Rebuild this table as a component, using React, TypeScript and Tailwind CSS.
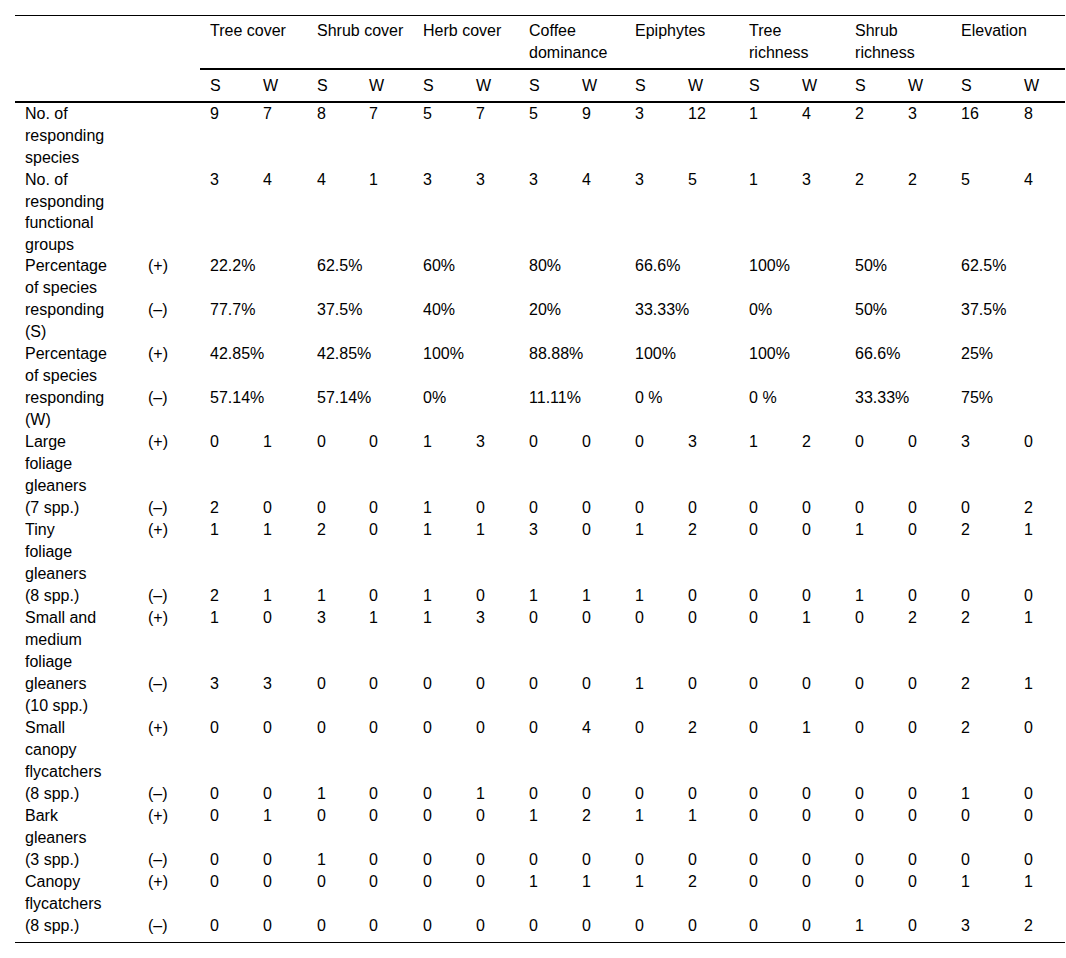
const groups = [
  "Tree cover",
  "Shrub cover",
  "Herb cover",
  "Coffee|dominance",
  "Epiphytes",
  "Tree|richness",
  "Shrub|richness",
  "Elevation",
];

// column widths in px (label, sign, then S/W pairs)
const widths = [123, 62, 53, 54, 52, 54, 53, 53, 53, 53, 53, 61, 53, 53, 53, 53, 63, 51];

type Row = { label: string; sign: string; values?: (string | number)[]; pct?: string[] };

const rows: Row[] = [
  { label: "No. of|responding|species", sign: "", values: [9, 7, 8, 7, 5, 7, 5, 9, 3, 12, 1, 4, 2, 3, 16, 8] },
  { label: "No. of|responding|functional|groups", sign: "", values: [3, 4, 4, 1, 3, 3, 3, 4, 3, 5, 1, 3, 2, 2, 5, 4] },
  { label: "Percentage|of species", sign: "(+)", pct: ["22.2%", "62.5%", "60%", "80%", "66.6%", "100%", "50%", "62.5%"] },
  { label: "responding|(S)", sign: "(–)", pct: ["77.7%", "37.5%", "40%", "20%", "33.33%", "0%", "50%", "37.5%"] },
  { label: "Percentage|of species", sign: "(+)", pct: ["42.85%", "42.85%", "100%", "88.88%", "100%", "100%", "66.6%", "25%"] },
  { label: "responding|(W)", sign: "(–)", pct: ["57.14%", "57.14%", "0%", "11.11%", "0 %", "0 %", "33.33%", "75%"] },
  { label: "Large|foliage|gleaners", sign: "(+)", values: [0, 1, 0, 0, 1, 3, 0, 0, 0, 3, 1, 2, 0, 0, 3, 0] },
  { label: "(7 spp.)", sign: "(–)", values: [2, 0, 0, 0, 1, 0, 0, 0, 0, 0, 0, 0, 0, 0, 0, 2] },
  { label: "Tiny|foliage|gleaners", sign: "(+)", values: [1, 1, 2, 0, 1, 1, 3, 0, 1, 2, 0, 0, 1, 0, 2, 1] },
  { label: "(8 spp.)", sign: "(–)", values: [2, 1, 1, 0, 1, 0, 1, 1, 1, 0, 0, 0, 1, 0, 0, 0] },
  { label: "Small and|medium|foliage", sign: "(+)", values: [1, 0, 3, 1, 1, 3, 0, 0, 0, 0, 0, 1, 0, 2, 2, 1] },
  { label: "gleaners|(10 spp.)", sign: "(–)", values: [3, 3, 0, 0, 0, 0, 0, 0, 1, 0, 0, 0, 0, 0, 2, 1] },
  { label: "Small|canopy|flycatchers", sign: "(+)", values: [0, 0, 0, 0, 0, 0, 0, 4, 0, 2, 0, 1, 0, 0, 2, 0] },
  { label: "(8 spp.)", sign: "(–)", values: [0, 0, 1, 0, 0, 1, 0, 0, 0, 0, 0, 0, 0, 0, 1, 0] },
  { label: "Bark|gleaners", sign: "(+)", values: [0, 1, 0, 0, 0, 0, 1, 2, 1, 1, 0, 0, 0, 0, 0, 0] },
  { label: "(3 spp.)", sign: "(–)", values: [0, 0, 1, 0, 0, 0, 0, 0, 0, 0, 0, 0, 0, 0, 0, 0] },
  { label: "Canopy|flycatchers", sign: "(+)", values: [0, 0, 0, 0, 0, 0, 1, 1, 1, 2, 0, 0, 0, 0, 1, 1] },
  { label: "(8 spp.)", sign: "(–)", values: [0, 0, 0, 0, 0, 0, 0, 0, 0, 0, 0, 0, 1, 0, 3, 2] },
];

const Lines = ({ text }: { text: string }) => (
  <>
    {text.split("|").map((t, i) => (
      <span key={i} className="block whitespace-nowrap">
        {t}
      </span>
    ))}
  </>
);

const App = () => {
  return (
    <div
      className="min-h-screen bg-white pl-[15px] pt-[15px] text-black"
      style={{ fontFamily: '"Liberation Sans", Arial, sans-serif' }}
    >
      <table className="w-[1050px] table-fixed border-collapse text-[16px] leading-[22px]">
        <colgroup>
          {widths.map((w, i) => (
            <col key={i} style={{ width: w }} />
          ))}
        </colgroup>
        <thead>
          <tr className="border-t border-black">
            <th colSpan={2} rowSpan={2} className="border-b-2 border-black" />
            {groups.map((g) => (
              <th
                key={g}
                colSpan={2}
                className="h-[53px] border-b-2 border-black px-[10px] pt-[4px] pb-[4px] text-left align-top font-normal"
              >
                <Lines text={g} />
              </th>
            ))}
          </tr>
          <tr>
            {groups.map((g) => (
              <>
                <th key={g + "s"} className="border-b-2 border-black px-[10px] pt-[5px] pb-[4px] text-left font-normal">
                  S
                </th>
                <th key={g + "w"} className="border-b-2 border-black px-[10px] pt-[5px] pb-[4px] text-left font-normal">
                  W
                </th>
              </>
            ))}
          </tr>
        </thead>
        <tbody className="border-b border-black">
          {rows.map((r, ri) => (
            <tr key={ri} className="align-top">
              <td className={`pl-[10px] pr-[4px] ${ri === 1 ? "leading-[21.5px]" : ""} ${ri === rows.length - 1 ? "pb-[5px]" : ""}`}>
                <Lines text={r.label} />
              </td>
              <td className="pl-[10px]">{r.sign}</td>
              {r.values
                ? r.values.map((v, i) => (
                    <td key={i} className="whitespace-nowrap pl-[10px]">
                      {v}
                    </td>
                  ))
                : r.pct!.map((v, i) => (
                    <td key={i} colSpan={2} className="whitespace-nowrap pl-[10px]">
                      {v}
                    </td>
                  ))}
            </tr>
          ))}
        </tbody>
      </table>
    </div>
  );
};

export default App;
